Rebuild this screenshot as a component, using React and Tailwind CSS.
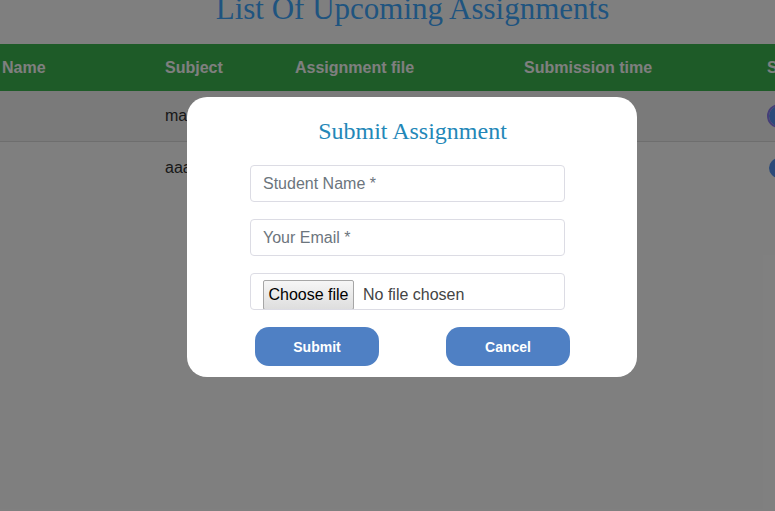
import React from 'react';

const rows = [
  { name: '', subject: 'ma' },
  { name: '', subject: 'aaa' },
];

const SubmitModal = () => {
  return (
    <div className="w-[450px] h-[280px] bg-white rounded-[20px] flex flex-col items-start pt-[20px]">
      <h2
        className="self-center text-[24px] leading-[28px] text-[#2387b8] h-[48px] pl-[1px]"
        style={{ fontFamily: '"Liberation Serif", serif' }}
      >
        Submit Assignment
      </h2>
      <div className="w-[315px] flex flex-col gap-[17px] ml-[63px]">
        <input
          type="text"
          placeholder="Student Name *"
          className="h-[37px] w-full border border-[#dcdce4] rounded-[4px] px-[12px] text-base text-[#495057] placeholder:text-[#6c757d] outline-none"
        />
        <input
          type="email"
          placeholder="Your Email *"
          className="h-[37px] w-full border border-[#dcdce4] rounded-[4px] px-[12px] text-base text-[#495057] placeholder:text-[#6c757d] outline-none"
        />
        <label className="h-[37px] w-full border border-[#dcdce4] rounded-[4px] pl-[12px] pt-[6px] overflow-hidden flex items-start cursor-pointer">
          <input type="file" className="hidden" />
          <span className="h-[30px] w-[91px] flex items-center justify-center border border-[#a6a6a6] rounded-[2px] bg-gradient-to-b from-[#f6f6f6] to-[#dedede] text-base text-black">
            Choose file
          </span>
          <span className="ml-[9px] h-[30px] flex items-center text-base text-[#444]">No file chosen</span>
        </label>
      </div>
      <div className="w-[315px] flex justify-between mt-[17px] ml-[68px]">
        <button className="w-[124px] h-[39px] rounded-[14px] bg-[#4f80c4] text-white text-sm font-bold">
          Submit
        </button>
        <button className="w-[124px] h-[39px] rounded-[14px] bg-[#4f80c4] text-white text-sm font-bold">
          Cancel
        </button>
      </div>
    </div>
  );
};

const App = () => {
  return (
    <div
      className="relative w-[775px] h-[511px] overflow-hidden bg-white"
      style={{ fontFamily: '"Liberation Sans", Arial, sans-serif' }}
    >
      <h1
        className="text-center text-[31px] leading-[34px] text-[#3ea8ff] -mt-[8px] h-[52px] pl-[50px]"
        style={{ fontFamily: '"Liberation Serif", serif' }}
      >
        List Of Upcoming Assignments
      </h1>

      <div className="w-[900px]">
        <div className="flex items-center h-[47px] bg-[#3cb650] text-white font-bold text-base">
          <div className="w-[165px] pl-[2px]">Name</div>
          <div className="w-[130px]">Subject</div>
          <div className="w-[229px]">Assignment file</div>
          <div className="w-[243px]">Submission time</div>
          <div>Status</div>
        </div>
        {rows.map((r, i) => (
          <div
            key={i}
            className={`flex items-center h-[51px] text-base text-[#333] ${i === 0 ? 'bg-[#f4f4f4] border-b border-[#dcdcdc]' : 'bg-white'}`}
          >
            <div className="w-[165px] pl-[2px]">{r.name}</div>
            <div className="w-[130px]">{r.subject}</div>
            <div className="w-[229px]"></div>
            <div className="w-[243px]"></div>
            <div className="pl-[2px]">
              <span
                className={`block w-[20px] h-[20px] rounded-full bg-[#5694f4] ${i === 0 ? 'outline-2 outline-[#8a7cf0]' : ''}`}
              ></span>
            </div>
          </div>
        ))}
      </div>

      <div className="absolute inset-0 bg-black/50 flex items-start pt-[97px] pl-[187px]">
        <SubmitModal />
      </div>
    </div>
  );
};

export default App;
